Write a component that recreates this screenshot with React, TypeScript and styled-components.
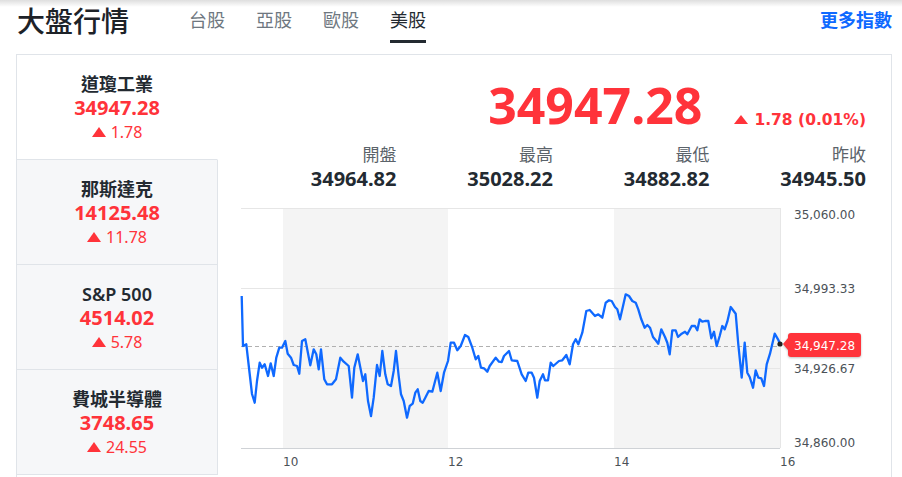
import styled, { createGlobalStyle } from "styled-components";

const GlobalStyle = createGlobalStyle`
  html, body {
    margin: 0;
    padding: 0;
    background: #fff;
  }
  body {
    font-family: "Noto Sans", "Noto Sans CJK TC", sans-serif;
    color: #232a31;
  }
`;

const RED = "#ff333a";

type IndexItem = { name: string; price: string; change: string };

const indices: IndexItem[] = [
  { name: "道瓊工業", price: "34947.28", change: "1.78" },
  { name: "那斯達克", price: "14125.48", change: "11.78" },
  { name: "S&P 500", price: "4514.02", change: "5.78" },
  { name: "費城半導體", price: "3748.65", change: "24.55" },
];

const stats = [
  { label: "開盤", value: "34964.82" },
  { label: "最高", value: "35028.22" },
  { label: "最低", value: "34882.82" },
  { label: "昨收", value: "34945.50" },
];

// traced intraday points, page coordinates
const points: [number, number][] = [
  [242.7, 295], [244, 345], [247.3, 343.3], [250.7, 373], [253, 393], [255.7, 401.7],
  [258, 380], [260.7, 361.7], [263, 366.7], [265.7, 363.3], [269, 375], [271.7, 362.3],
  [274.7, 375], [277.3, 356.7], [280.3, 346.7], [283, 346.7], [286.3, 340], [288.7, 352.7],
  [292, 356.7], [294.7, 364], [298, 365], [300.3, 372.7], [303, 340], [306.3, 338.3],
  [311.3, 364.3], [314.7, 348.3], [317.3, 353.3], [319.7, 368.3], [322, 348.3], [325.3, 378.3],
  [328, 383.3], [333, 383.3], [337, 378.3], [341.3, 356.7], [344.7, 360.7], [349.7, 365],
  [353, 396.7], [355.3, 366.7], [358.7, 353.3], [364, 380], [366.3, 373.3], [369, 400],
  [372, 415], [374.7, 396.7], [378, 364], [380.7, 375], [383.3, 350], [386.3, 373.3],
  [388.7, 383.3], [392, 385], [394.7, 370], [397, 350], [399.7, 375], [402, 393.3],
  [404.7, 400], [408, 416.7], [410.7, 405], [413.7, 402.7], [416.3, 391.7], [418.7, 388.3],
  [421.3, 400], [423.7, 401.7], [426.3, 396.7], [429.7, 390], [433.3, 390.7], [438.3, 371.7],
  [441.7, 390], [445, 371.7], [449, 360], [451.7, 341.7], [455, 341.7], [458.3, 349.3],
  [461.7, 345], [466, 334], [469.3, 336], [473.3, 346.7], [476.7, 358.3], [479.3, 355],
  [482, 366.7], [485, 367.3], [488.3, 370.7], [490.7, 365], [496.7, 356.7], [500, 360.7],
  [502.7, 361], [505, 355], [510, 350], [512.7, 359.3], [518.3, 360], [522.7, 373.3],
  [526.7, 380], [529.3, 371.7], [532.7, 371.7], [535, 376.7], [538.3, 396.7], [540.7, 380],
  [544, 373.3], [546, 379.3], [549, 379.3], [551.7, 361.7], [554.3, 365], [560, 360],
  [563.3, 359.3], [567.3, 354], [570.7, 363.3], [574, 343.3], [576.7, 338.3], [579.3, 343.3],
  [583.3, 331.7], [587.3, 310], [590.7, 309], [596, 315], [599.3, 313.3], [603.3, 316.7],
  [606.7, 301.7], [610, 299.3], [612.7, 300], [616, 306], [618.3, 308.3], [621, 318.3],
  [626.7, 293.3], [630, 295], [633.3, 300], [636.7, 301.7], [639.3, 308.3], [642.3, 318.3],
  [645.7, 326.7], [648.3, 324], [651, 326.7], [654, 336], [656.7, 339.3], [659.3, 342.7],
  [662.3, 328.3], [666, 336], [668.3, 341.7], [670.7, 353.3], [673.3, 329.3], [676.7, 329.3],
  [679, 336], [682.7, 332.7], [686, 330.7], [688.3, 333.3], [692.7, 325], [696, 325],
  [698.3, 329.3], [700.7, 318.3], [703.3, 320.7], [706, 320], [709.3, 320], [712.3, 337.3],
  [715, 330.7], [717.7, 345], [720.7, 335], [723.3, 325], [725.7, 328.3], [728.3, 320.7],
  [731.7, 306], [736.7, 312.7], [739.3, 343.3], [742.7, 376.7], [745.7, 341.7], [748.3, 371.7],
  [750.7, 376], [754, 386.7], [756.7, 369.3], [759.3, 376.7], [762.3, 377.3], [765, 385],
  [767.7, 363.3], [771, 352.7], [775.7, 332.7], [779, 338.3], [781, 342.7],
];

export default function App() {
  return (
    <Page>
      <GlobalStyle />
      <Header>
        <Title>大盤行情</Title>
        <Tabs>
          <Tab>台股</Tab>
          <Tab>亞股</Tab>
          <Tab>歐股</Tab>
          <Tab active>美股</Tab>
        </Tabs>
        <MoreLink href="#">更多指數</MoreLink>
      </Header>

      <Card>
        <Sidebar>
          {indices.map((item, i) => (
            <IndexRow key={item.name} active={i === 0}>
              <IndexName>{item.name}</IndexName>
              <IndexPrice>{item.price}</IndexPrice>
              <IndexChange>
                <Triangle />
                {item.change}
              </IndexChange>
            </IndexRow>
          ))}
        </Sidebar>

        <Main>
          <PriceRow>
            <BigPrice>34947.28</BigPrice>
            <BigChange>
              <Triangle small />
              1.78 (0.01%)
            </BigChange>
          </PriceRow>

          <Stats>
            {stats.map((s) => (
              <Stat key={s.label}>
                <StatLabel>{s.label}</StatLabel>
                <StatValue>{s.value}</StatValue>
              </Stat>
            ))}
          </Stats>

          <ChartWrap>
            <Chart />
          </ChartWrap>
        </Main>
      </Card>
    </Page>
  );
}

const Chart = () => {
  const line = points.map(([x, y]) => `${x},${y}`).join(" ");
  return (
    <svg width="625" height="277" viewBox="241 200 625 277">
      <rect x="284" y="207" width="165" height="240" fill="#f4f4f4" />
      <rect x="615" y="207" width="166" height="240" fill="#f4f4f4" />
      <g stroke="#e6e6e6" strokeWidth="1">
        <line x1="242" x2="781" y1="207.5" y2="207.5" />
        <line x1="242" x2="781" y1="287.5" y2="287.5" />
        <line x1="242" x2="781" y1="367.5" y2="367.5" />
        <line x1="781.5" x2="781.5" y1="207" y2="447" />
      </g>
      <line x1="242" x2="781" y1="447.5" y2="447.5" stroke="#cfd2d6" />
      <line x1="242" x2="781" y1="345.5" y2="345.5" stroke="#b0b0b0" strokeDasharray="4 3" />
      <polyline points={line} fill="none" stroke="#0f69ff" strokeWidth="2.3" strokeLinejoin="round" />
      <circle cx="781" cy="343" r="2.6" fill="#222" />

      <g fontFamily="DejaVu Sans, sans-serif" fontSize="12" fill="#4b5157">
        <text x="795" y="217.5">35,060.00</text>
        <text x="795" y="291.5">34,993.33</text>
        <text x="795" y="372">34,926.67</text>
        <text x="795" y="445.5">34,860.00</text>
        <text x="284" y="465">10</text>
        <text x="449" y="465">12</text>
        <text x="615" y="465">14</text>
        <text x="781" y="465">16</text>
      </g>

      <g style={{ filter: "drop-shadow(0 1px 1px rgba(0,0,0,0.25))" }}>
        <path
          d="M784 343 L789 337 L789 335 Q789 332 792 332 L859 332 Q862 332 862 335 L862 353 Q862 356 859 356 L792 356 Q789 356 789 353 L789 349 Z"
          fill={RED}
        />
      </g>
      <text x="795" y="348.5" fontFamily="DejaVu Sans, sans-serif" fontSize="12" fill="#fff">
        34,947.28
      </text>
    </svg>
  );
};

const Page = styled.div`
  width: 902px;
  height: 477px;
  box-sizing: border-box;
  padding: 0 10px 0 16px;
  overflow: hidden;
  background: linear-gradient(rgba(0, 0, 0, 0.13), rgba(0, 0, 0, 0) 7px);
`;

const Header = styled.header`
  display: flex;
  align-items: flex-start;
  height: 54px;
  padding-left: 1px;
`;

const Title = styled.h1`
  margin: 0;
  font-size: 28px;
  line-height: 42px;
  font-weight: 500;
  color: #1d2228;
`;

const Tabs = styled.nav`
  display: flex;
  gap: 31px;
  margin-left: 60px;
`;

const Tab = styled.a<{ active?: boolean }>`
  display: block;
  font-size: 18px;
  line-height: 40px;
  color: ${(p) => (p.active ? "#232a31" : "#6e7780")};
  border-bottom: 3px solid ${(p) => (p.active ? "#232a31" : "transparent")};
  cursor: pointer;
`;

const MoreLink = styled.a`
  margin-left: auto;
  font-size: 18px;
  line-height: 40px;
  font-weight: 600;
  color: #0f69ff;
  text-decoration: none;
`;

const Card = styled.section`
  display: grid;
  grid-template-columns: 201px 1fr;
  border: 1px solid #e0e4e9;
  height: 500px;
`;

const Sidebar = styled.div`
  display: flex;
  flex-direction: column;
`;

const IndexRow = styled.div<{ active?: boolean }>`
  box-sizing: border-box;
  height: 105px;
  padding-top: 17px;
  display: flex;
  flex-direction: column;
  align-items: center;
  background: ${(p) => (p.active ? "#fff" : "#f6f7f9")};
  border-right: 1px solid ${(p) => (p.active ? "transparent" : "#e0e4e9")};
  border-bottom: 1px solid #e0e4e9;
`;

const IndexName = styled.div`
  font-size: 18px;
  line-height: 24px;
  font-weight: 600;
  color: #232a31;
`;

const IndexPrice = styled.div`
  font-size: 20px;
  line-height: 24px;
  font-weight: 700;
  color: ${RED};
`;

const IndexChange = styled.div`
  display: flex;
  align-items: center;
  gap: 5px;
  font-size: 16px;
  line-height: 24px;
  color: ${RED};
`;

const Triangle = styled.span<{ small?: boolean }>`
  display: inline-block;
  width: 0;
  height: 0;
  border-style: solid;
  border-width: ${(p) => (p.small ? "0 7px 9px 7px" : "0 7px 10px 7px")};
  border-color: transparent transparent ${RED} transparent;
  margin-top: -1px;
`;

const Main = styled.div`
  padding: 20px 25px 0 22px;
`;

const PriceRow = styled.div`
  display: flex;
  justify-content: flex-end;
  align-items: baseline;
  gap: 32px;
`;

const BigPrice = styled.div`
  font-size: 50px;
  line-height: 60px;
  font-weight: 700;
  color: ${RED};
`;

const BigChange = styled.div`
  display: flex;
  align-items: center;
  gap: 6px;
  font-family: "DejaVu Sans", sans-serif;
  font-size: 15.5px;
  font-weight: 700;
  color: ${RED};
`;

const Stats = styled.div`
  display: grid;
  grid-template-columns: repeat(4, 1fr);
  margin-top: 8px;
`;

const Stat = styled.div`
  text-align: right;
`;

const StatLabel = styled.div`
  font-size: 17px;
  line-height: 24px;
  color: #5b636a;
`;

const StatValue = styled.div`
  font-size: 20px;
  line-height: 24px;
  font-weight: 700;
  color: #232a31;
`;

const ChartWrap = styled.div`
  margin-top: 10px;
  svg {
    display: block;
  }
`;
